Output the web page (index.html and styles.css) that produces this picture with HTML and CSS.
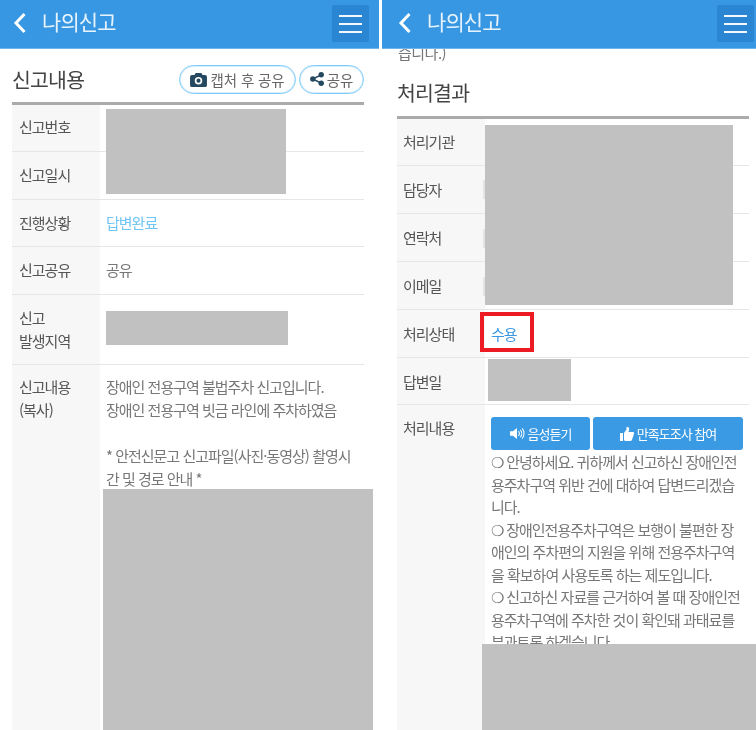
FILE: index.html
```html
<!DOCTYPE html>
<html lang="ko">
<head>
<meta charset="utf-8">
<title>나의신고</title>
<link rel="stylesheet" href="styles.css">
</head>
<body>
<div class="stage">
  <section class="phone phone-left">
    <header class="topbar">
      <svg class="back" viewBox="0 0 14 22" width="14" height="22"><path d="M11.5 2 3 11l8.5 9" fill="none" stroke="#fff" stroke-width="3"/></svg>
      <h1 class="topbar-title">나의신고</h1>
      <button class="menu"><span></span><span></span><span></span></button>
    </header>
    <main class="content">
      <div class="section-head">
        <h2 class="section-title">신고내용</h2>
        <div class="pills">
          <a class="pill pill-wide"><svg viewBox="0 0 18 16" width="17" height="15"><path fill="#24485f" fill-rule="evenodd" d="M6 1h6l1.3 2.2H16a2 2 0 0 1 2 2V14a2 2 0 0 1-2 2H2a2 2 0 0 1-2-2V5.200a2 2 0 0 1 2-2h2.700zM9 5.200a4 4 0 1 0 0 8 4 4 0 0 0 0-8zm0 1.800a2.200 2.200 0 1 1 0 4.400 2.200 2.200 0 0 1 0-4.400z"/></svg>캡처 후 공유</a>
          <a class="pill pill-narrow"><svg viewBox="0 0 14 14" width="14" height="14"><g fill="#24485f"><circle cx="2.800" cy="7" r="2.700"/><circle cx="11.200" cy="2.800" r="2.700"/><circle cx="11.200" cy="11.200" r="2.700"/></g><path d="M2.800 7l8.400-4.200M2.800 7l8.400 4.200" stroke="#24485f" stroke-width="1.500"/></svg>공유</a>
        </div>
      </div>
      <div class="table table-left">
        <div class="row row-47"><div class="th">신고번호</div><div class="td"></div></div>
        <div class="row row-48"><div class="th">신고일시</div><div class="td"></div></div>
        <div class="row row-47"><div class="th">진행상황</div><div class="td link-light">답변완료</div></div>
        <div class="row row-48"><div class="th">신고공유</div><div class="td">공유</div></div>
        <div class="row row-70"><div class="th">신고<br>발생지역</div><div class="td"></div></div>
        <div class="row row-fill"><div class="th th-top">신고내용<br>(복사)</div><div class="td td-top td-report">장애인 전용구역 불법주차 신고입니다.<br>장애인 전용구역 빗금 라인에 주차하였음<br><br>* 안전신문고 신고파일(사진·동영상) 촬영시간 및 경로 안내 *</div></div>
      </div>
    </main>
    <div class="redact l1"></div>
    <div class="redact l2"></div>
    <div class="redact l3"></div>
  </section>

  <section class="phone phone-right">
    <header class="topbar">
      <svg class="back" viewBox="0 0 14 22" width="14" height="22"><path d="M11.500 2 3 11l8.500 9" fill="none" stroke="#fff" stroke-width="3"/></svg>
      <h1 class="topbar-title">나의신고</h1>
      <button class="menu"><span></span><span></span><span></span></button>
    </header>
    <main class="content">
      <div class="clip-line"><span>습니다.)</span></div>
      <div class="section-head section-head-right">
        <h2 class="section-title">처리결과</h2>
      </div>
      <div class="table table-right">
        <div class="row row-47"><div class="th">처리기관</div><div class="td"></div></div>
        <div class="row row-48"><div class="th">담당자</div><div class="td"></div></div>
        <div class="row row-48"><div class="th">연락처</div><div class="td"></div></div>
        <div class="row row-48"><div class="th">이메일</div><div class="td"></div></div>
        <div class="row row-48"><div class="th">처리상태</div><div class="td link-blue">수용</div></div>
        <div class="row row-47"><div class="th">답변일</div><div class="td"></div></div>
        <div class="row row-fill"><div class="th th-top">처리내용</div>
          <div class="td td-top td-answer">
            <div class="actions">
              <a class="action action-a"><svg viewBox="0 0 16 14" width="15" height="13"><path fill="#fff" d="M0 4.500h3L7.500 1v12L3 9.500H0z"/><path d="M9 4.500a3.500 3.500 0 0 1 0 5M11 3a6 6 0 0 1 0 8M13 1.500a8.500 8.500 0 0 1 0 11" fill="none" stroke="#fff" stroke-width="1.100"/></svg>음성듣기</a>
              <a class="action action-b"><svg viewBox="0 0 14 14" width="14" height="14"><path fill="#fff" d="M0 6h3v8H0zM4 6l2.500-3.500V.5C6.500 0 7 0 7.500 0 9 0 9.500 1.500 9 3L8.500 5H13c1 0 1.300 1 1 1.700L12 12.800c-.3.800-.8 1.200-1.500 1.200H6c-1 0-2-.5-2-1z"/></svg>만족도조사 참여</a>
            </div>
            <p class="answer">❍ 안녕하세요. 귀하께서 신고하신 장애인전용주차구역 위반 건에 대하여 답변드리겠습니다.<br>❍ 장애인전용주차구역은 보행이 불편한 장애인의 주차편의 지원을 위해 전용주차구역을 확보하여 사용토록 하는 제도입니다.<br>❍ 신고하신 자료를 근거하여 볼 때 장애인전용주차구역에 주차한 것이 확인돼 과태료를 부과토록 하겠습니다.</p>
          </div>
        </div>
      </div>
    </main>
    <div class="redact r1"></div>
    <div class="redact r2"></div>
    <div class="redact r3"></div>
    <div class="redact r4"></div>
    <div class="redact r5"></div>
    <div class="redact r6"></div>
    <div class="redbox"></div>
  </section>
</div>
</body>
</html>
```

FILE: styles.css
```css
* { box-sizing: border-box; }
html, body { margin: 0; padding: 0; background: #fff; }
body {
  font-family: "Noto Sans CJK KR", "Noto Sans", sans-serif;
  color: #777;
  overflow: hidden;
}
.stage { display: flex; gap: 3px; width: 756px; height: 730px; }
.phone { position: relative; height: 730px; overflow: hidden; background: #fff; display: flex; flex-direction: column; }
.phone-left { width: 379px; }
.phone-right { width: 374px; }

.topbar {
  flex: none;
  height: 49px;
  background: #3797e2;
  border-bottom: 1px solid #6db5ec;
  display: flex;
  align-items: center;
  padding-left: 13px;
  padding-right: 10px;
}
.phone-right .topbar { padding-right: 2px; padding-left: 16px; }
.back { flex: none; margin-top: -3px; }
.topbar-title {
  margin: -6px 0 0 15px;
  font-size: 21px;
  font-weight: 400;
  letter-spacing: -0.900px;
  color: #e6f3fc;
  flex: 1;
  filter: blur(0.35px);
}
.menu {
  flex: none;
  width: 37px;
  height: 37px;
  margin-top: -1px;
  background: #2a86d2;
  border: 0;
  border-radius: 2px;
  padding: 0;
  display: flex;
  flex-direction: column;
  align-items: center;
  justify-content: center;
  gap: 6px;
}
.menu span { display: block; width: 23px; height: 2px; background: #f2f8fd; }

.content { flex: 1; min-height: 0; overflow: hidden; display: flex; flex-direction: column; filter: blur(0.35px); }
.phone-left .content { padding: 0 15px 0 12px; }
.phone-right .content { padding: 0 7px 0 15px; }

.section-head { height: 53px; display: flex; align-items: center; justify-content: space-between; flex: none; padding-top: 6px; }
.section-head-right { height: 52px; padding-top: 3px; }
.section-title { margin: 0; font-size: 20.500px; font-weight: 400; letter-spacing: -0.800px; color: #444; }

.clip-line { height: 15px; display: flex; align-items: flex-end; overflow: hidden; font-size: 15px; line-height: 22px; padding-left: 1px; letter-spacing: -0.500px; color: #777; flex: none; }

.pills { display: flex; gap: 3px; margin-top: 1px; }
.pill {
  height: 29px;
  border: 1px solid #7fcbf7;
  box-shadow: inset 0 0 0 1px #d4eefd;
  border-radius: 15px;
  display: flex;
  align-items: center;
  justify-content: center;
  gap: 3px;
  font-size: 14.500px;
  color: #666;
  background: #fff;
}
.pill-wide { width: 117px; letter-spacing: -0.100px; }
.pill-narrow { width: 65px; letter-spacing: -0.200px; }

.table { border-top: 3px solid #ababab; flex: 1; display: flex; flex-direction: column; }
.row { display: flex; border-bottom: 1px solid #e6e6e6; flex: none; }
.row-48 { height: 48px; }
.row-47 { height: 47px; }
.row-70 { height: 70px; }
.row-fill { flex: 1; border-bottom: 0; }
.th {
  width: 88px;
  flex: none;
  background: #f7f7f7;
  padding-left: 7px;
  padding-top: 12px;
  font-size: 15px;
  line-height: 23px;
  letter-spacing: -1px;
  color: #555;
  white-space: nowrap;
}
.td {
  flex: 1;
  padding: 12px 6px 0;
  font-size: 15px;
  line-height: 23px;
  letter-spacing: -1px;
  color: #777;
}
.table-right .th { padding-left: 6px; }
.table-left .th, .table-left .td { padding-top: 11px; }
.table-left .row:first-child .th { padding-top: 10px; }
.table-right .row:first-child .th { padding-top: 11px; }
.table-left .th-top, .table-left .td-top { padding-top: 10px; }
.table-right .th-top { padding-top: 11px; }
.td-report { flex: none; width: 261px; }
.link-light { color: #6fc5f6; }
.link-blue { color: #3a97e2; }

.td-answer { padding: 12px 6px 0; }
.actions { display: flex; gap: 3px; }
.action {
  height: 33px;
  background: #3a9ae4;
  border-radius: 3px;
  color: #fff;
  font-size: 13px;
  letter-spacing: -1px;
  display: flex;
  align-items: center;
  justify-content: center;
  gap: 3px;
}
.action-a { width: 99px; }
.action-b { width: 150px; }
.answer { margin: 1px 0 0; font-size: 15px; line-height: 22.500px; letter-spacing: -1px; color: #777; width: 254px; }

.redact { position: absolute; background: #c1c1c1; }
.l1 { left: 106px; top: 109px; width: 180px; height: 85px; }
.l2 { left: 106px; top: 311px; width: 182px; height: 34px; }
.l3 { left: 103px; top: 489px; width: 270px; height: 241px; }
.r1 { left: 103px; top: 125px; width: 248px; height: 180px; }
.r2 { left: 106px; top: 359px; width: 83px; height: 42px; }
.r3 { left: 100px; top: 644px; width: 274px; height: 86px; }
.r4 { left: 101px; top: 180px; width: 2px; height: 19px; background: #e4e4e4; }
.r5 { left: 101px; top: 229px; width: 2px; height: 19px; background: #e4e4e4; }
.r6 { left: 101px; top: 277px; width: 2px; height: 19px; background: #e4e4e4; }
.redbox { position: absolute; left: 98px; top: 312px; width: 54px; height: 40px; border: 4.500px solid #ed1c24; }
```
